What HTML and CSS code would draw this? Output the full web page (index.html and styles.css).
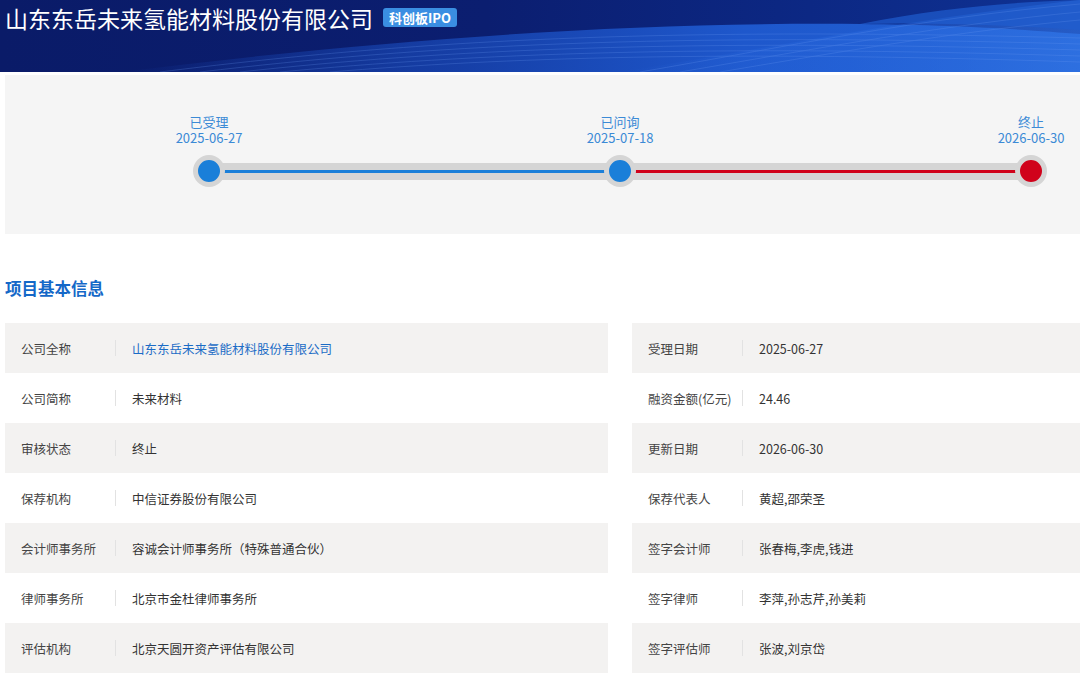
FILE: index.html
```html
<!DOCTYPE html>
<html lang="zh-CN">
<head>
<meta charset="utf-8">
<title>山东东岳未来氢能材料股份有限公司</title>
<link rel="stylesheet" href="styles.css">
</head>
<body>
<header class="hero">
  <svg class="hero-waves" viewBox="0 0 1080 72" preserveAspectRatio="none" aria-hidden="true">
    <defs>
      <linearGradient id="band" x1="0" y1="0" x2="1" y2="0">
        <stop offset="0" stop-color="#1a4cc0" stop-opacity="0"/>
        <stop offset="0.3" stop-color="#1b4fc2" stop-opacity="0.6"/>
        <stop offset="0.65" stop-color="#1f5ad0" stop-opacity="0.95"/>
        <stop offset="1" stop-color="#2262d4" stop-opacity="1"/>
      </linearGradient>
      <linearGradient id="band2" x1="0" y1="0" x2="1" y2="0">
        <stop offset="0" stop-color="#2a6ae0" stop-opacity="0"/>
        <stop offset="0.5" stop-color="#2a6ae0" stop-opacity="0.4"/>
        <stop offset="1" stop-color="#3578e8" stop-opacity="0.6"/>
      </linearGradient>
    </defs>
    <path d="M120 72 C 380 40, 620 22, 860 24 C 960 25, 1030 30, 1080 34 L1080 72 Z" fill="url(#band)"/>
    <path d="M620 72 C 760 50, 900 20, 1080 0 L1080 72 Z" fill="url(#band2)"/>
    <path d="M860 24 C 940 8, 1010 2, 1080 0 L1080 30 C 1020 26, 940 22, 860 24 Z" fill="#1f5ccf" opacity="0.7"/>
    <g fill="none" stroke="#6b9bf4" stroke-width="0.6" opacity="0.4">
      <path d="M160 72 C 400 42, 640 26, 1080 38"/>
      <path d="M200 72 C 420 46, 660 32, 1080 44"/>
      <path d="M240 72 C 440 50, 680 38, 1080 50"/>
      <path d="M280 72 C 470 54, 700 44, 1080 56"/>
      <path d="M330 72 C 500 58, 720 50, 1080 62"/>
      <path d="M640 72 C 780 48, 920 18, 1080 4"/>
      <path d="M680 72 C 820 48, 950 24, 1080 12"/>
      <path d="M720 72 C 850 50, 970 30, 1080 20"/>
    </g>
  </svg>
  <div class="hero-title">
    <h1 class="company">山东东岳未来氢能材料股份有限公司</h1>
    <span class="badge">科创板IPO</span>
  </div>
</header>

<main class="page">
  <section class="progress">
    <div class="timeline">
      <div class="node">
        <div class="node-label"><div>已受理</div><div>2025-06-27</div></div>
        <div class="dot dot-blue"></div>
      </div>
      <div class="seg"><span class="seg-line seg-blue"></span></div>
      <div class="node">
        <div class="node-label"><div>已问询</div><div>2025-07-18</div></div>
        <div class="dot dot-blue"></div>
      </div>
      <div class="seg"><span class="seg-line seg-red"></span></div>
      <div class="node">
        <div class="node-label"><div>终止</div><div>2026-06-30</div></div>
        <div class="dot dot-red"></div>
      </div>
    </div>
  </section>

  <h2 class="section-title">项目基本信息</h2>

  <div class="info-grid">
    <div class="row shade"><span class="label">公司全称</span><span class="sep"></span><span class="value link">山东东岳未来氢能材料股份有限公司</span></div>
    <div class="row shade"><span class="label">受理日期</span><span class="sep"></span><span class="value">2025-06-27</span></div>

    <div class="row"><span class="label">公司简称</span><span class="sep"></span><span class="value">未来材料</span></div>
    <div class="row"><span class="label">融资金额(亿元)</span><span class="sep"></span><span class="value">24.46</span></div>

    <div class="row shade"><span class="label">审核状态</span><span class="sep"></span><span class="value">终止</span></div>
    <div class="row shade"><span class="label">更新日期</span><span class="sep"></span><span class="value">2026-06-30</span></div>

    <div class="row"><span class="label">保荐机构</span><span class="sep"></span><span class="value">中信证券股份有限公司</span></div>
    <div class="row"><span class="label">保荐代表人</span><span class="sep"></span><span class="value">黄超,邵荣圣</span></div>

    <div class="row shade"><span class="label">会计师事务所</span><span class="sep"></span><span class="value">容诚会计师事务所（特殊普通合伙）</span></div>
    <div class="row shade"><span class="label">签字会计师</span><span class="sep"></span><span class="value">张春梅,李虎,钱进</span></div>

    <div class="row"><span class="label">律师事务所</span><span class="sep"></span><span class="value">北京市金杜律师事务所</span></div>
    <div class="row"><span class="label">签字律师</span><span class="sep"></span><span class="value">李萍,孙志芹,孙美莉</span></div>

    <div class="row shade"><span class="label">评估机构</span><span class="sep"></span><span class="value">北京天圆开资产评估有限公司</span></div>
    <div class="row shade"><span class="label">签字评估师</span><span class="sep"></span><span class="value">张波,刘京岱</span></div>
  </div>
</main>
</body>
</html>
```

FILE: styles.css
```css
html, body {
  margin: 0;
  padding: 0;
  background: #ffffff;
  overflow: hidden;
}

body {
  font-family: "Noto Sans CJK SC", "Noto Sans", "Open Sans", sans-serif;
  color: #333333;
}

/* ---------- header ---------- */
.hero {
  position: relative;
  height: 72px;
  background: linear-gradient(90deg, #0a1b68 0%, #0b1e70 45%, #0c2884 75%, #0f3294 100%);
  overflow: hidden;
}

.hero-waves {
  position: absolute;
  left: 0;
  top: 0;
  width: 100%;
  height: 100%;
}

.hero-title {
  position: relative;
  display: flex;
  align-items: center;
  gap: 10px;
  height: 36px;
  padding-left: 5px;
}

.company {
  margin: 0;
  font-size: 23px;
  font-weight: 400;
  line-height: 36px;
  color: #ffffff;
}

.badge {
  display: inline-block;
  height: 19px;
  line-height: 19px;
  padding: 0 6px;
  margin-top: -2px;
  border-radius: 3px;
  background: #3a8ee2;
  color: #ffffff;
  font-size: 13px;
  font-weight: 700;
}

/* ---------- page ---------- */
.page {
  width: 1230px;
  padding: 3px 0 0 5px;
}

.progress {
  background: #f5f5f5;
  height: 159px;
  box-sizing: border-box;
  padding-top: 39px;
}

.timeline {
  display: flex;
  align-items: flex-end;
  width: 854px;
  margin-left: 188px;
}

.node {
  display: flex;
  flex-direction: column;
  align-items: center;
  width: 32px;
  flex: none;
}

.node-label {
  white-space: nowrap;
  text-align: center;
  font-size: 13px;
  line-height: 16px;
  color: #3b8ad6;
  margin-bottom: 9px;
}

.dot {
  box-sizing: border-box;
  width: 32px;
  height: 32px;
  border-radius: 50%;
  border: 5px solid #d5d5d5;
  position: relative;
  z-index: 1;
}

.dot-blue { background: #1a7fd9; }
.dot-red  { background: #d0021b; }

.seg {
  flex: 1;
  height: 17px;
  margin: 0 -6px 7px;
  background: #d5d5d5;
  display: flex;
  align-items: center;
}

.seg-line {
  display: block;
  width: 100%;
  height: 3px;
}

.seg-blue { background: #1a7fd9; }
.seg-red  { background: #d0021b; }

/* ---------- section ---------- */
.section-title {
  margin: 42px 0 23px;
  font-size: 16.5px;
  line-height: 24px;
  font-weight: 700;
  color: #1468c8;
}

.info-grid {
  display: grid;
  grid-template-columns: 603px 603px;
  column-gap: 24px;
  grid-auto-rows: 50px;
}

.row {
  display: flex;
  align-items: center;
  padding-left: 16px;
  font-size: 12.5px;
}

.row.shade {
  background: #f3f2f1;
}

.label {
  width: 94px;
  flex: none;
  color: #444444;
  white-space: nowrap;
}

.sep {
  width: 1px;
  height: 16px;
  background: #e2e2e2;
  flex: none;
}

.value {
  margin-left: 16px;
  color: #333333;
  white-space: nowrap;
}

.value.link {
  color: #1b6cc6;
}
```
